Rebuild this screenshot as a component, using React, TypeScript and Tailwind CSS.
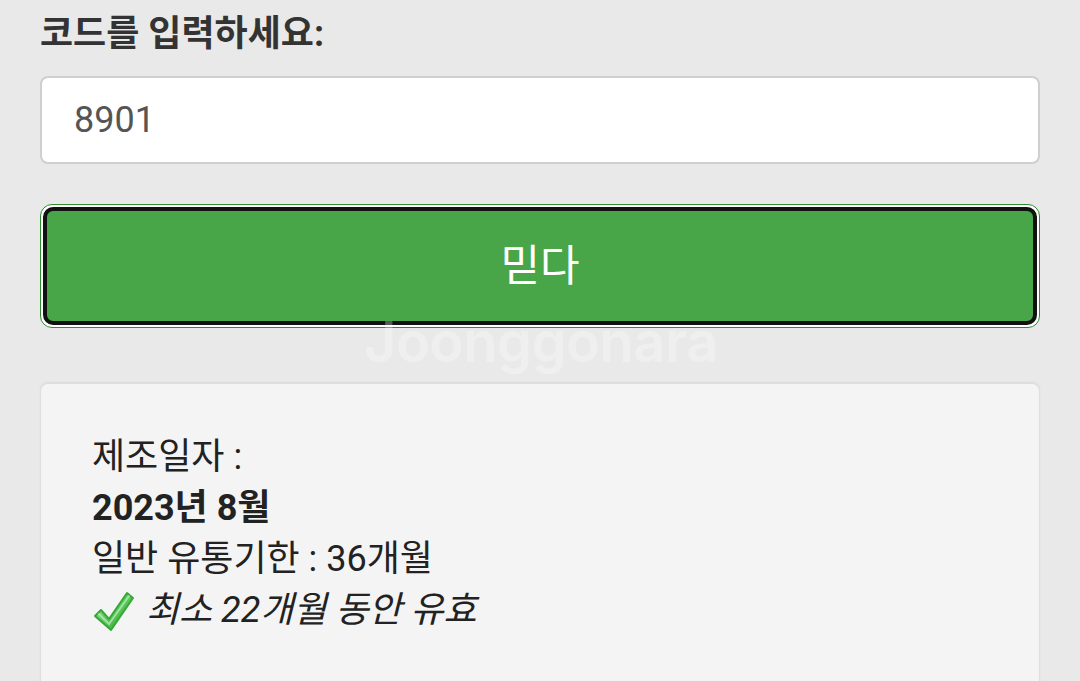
import React from "react";

function Check() {
  return (
    <svg width="44" height="44" viewBox="0 0 44 44" className="shrink-0">
      <defs>
        <linearGradient id="cg" x1="0" y1="0" x2="1" y2="1">
          <stop offset="0" stopColor="#a8e8a8" />
          <stop offset="0.5" stopColor="#5cc85c" />
          <stop offset="1" stopColor="#2aa02a" />
        </linearGradient>
      </defs>
      <path
        d="M3 27 L9 21 L17 30 L35 4 L41 9 L19 41 Z"
        fill="url(#cg)"
        stroke="#35a835"
        strokeWidth="2"
        strokeLinejoin="round"
      />
      <path d="M7 25 L17 35 L37 7" fill="none" stroke="#d0f7d0" strokeWidth="2" opacity="0.6" strokeLinecap="round" />
    </svg>
  );
}

export default function App() {
  return (
    <div
      className="relative min-h-[681px] w-[1080px] overflow-hidden bg-[#e9e9e9] px-[40px] pt-[10px] text-[#333]"
      style={{ fontFamily: "Roboto, 'Noto Sans CJK KR', sans-serif" }}
    >
      <h1 className="text-[36px] font-bold leading-[48px] text-[#333]">코드를 입력하세요:</h1>
      <div className="mt-[18px] flex h-[88px] items-center rounded-[8px] border-2 border-[#cfcfcf] bg-white px-[32px] text-[36px] text-[#555]">
        8901
      </div>
      <div className="mt-[40px] rounded-[12px] border border-[#2e8b2e] bg-white p-[2px]">
        <button className="flex h-[118px] w-full items-center justify-center rounded-[10px] border-[4px] border-[#111] bg-[#48a648] text-[43px] text-white">
          믿다
        </button>
      </div>
      <div className="mt-[55px] h-[320px] rounded-[8px] border border-[#dedede] bg-[#f4f4f4] px-[51px] pt-[48px] text-[36px] leading-[51px] text-[#222] shadow-[0_-1px_2px_rgba(0,0,0,0.06)]">
        <div>제조일자 :</div>
        <div className="font-bold">2023년 8월</div>
        <div>일반 유통기한 : 36개월</div>
        <div className="flex items-center gap-[10px]">
          <Check />
          <span className="italic">최소 22개월 동안 유효</span>
        </div>
      </div>
      <div
        className="pointer-events-none absolute left-[364px] top-[300px] text-[56px] font-semibold tracking-[-0.5px] text-white/30"
        style={{ fontFamily: "Inter, sans-serif" }}
      >
        Joonggonara
      </div>
    </div>
  );
}
